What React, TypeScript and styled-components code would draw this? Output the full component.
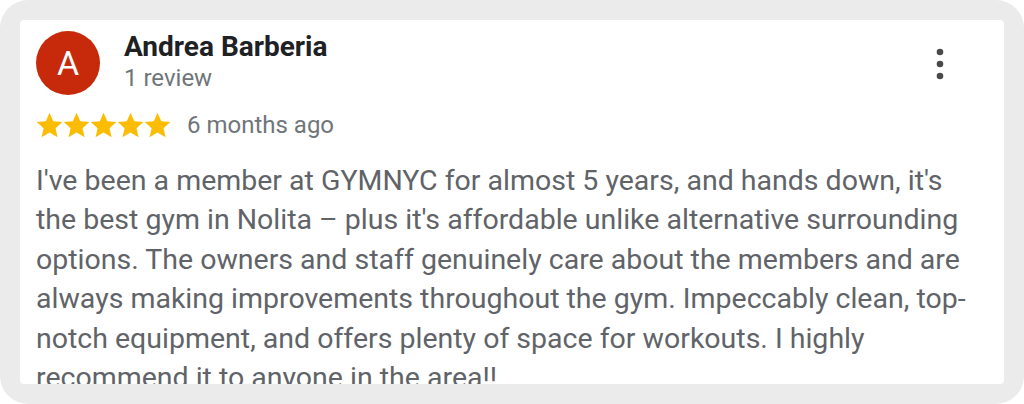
import React from "react";
import styled, { createGlobalStyle } from "styled-components";

const Global = createGlobalStyle`
  html, body { margin: 0; padding: 0; background: #ffffff; }
  body { font-family: Roboto, "Noto Sans", Arial, sans-serif; }
`;

const Frame = styled.div`
  width: 1024px;
  height: 404px;
  box-sizing: border-box;
  background: #ebebeb;
  border-radius: 28px;
  padding: 20px;
`;

const Card = styled.div`
  height: 364px;
  background: #ffffff;
  border-radius: 4px;
  overflow: hidden;
  box-sizing: border-box;
  padding: 11px 16px 0 16px;
`;

const Header = styled.div`
  display: flex;
  align-items: flex-start;
`;

const Avatar = styled.div`
  width: 64px;
  height: 64px;
  border-radius: 50%;
  background: #c62a0b;
  color: #ffffff;
  display: flex;
  align-items: center;
  justify-content: center;
  font-size: 34px;
  font-weight: 400;
  flex-shrink: 0;
`;

const Who = styled.div`
  display: flex;
  flex-direction: column;
  margin-left: 24px;
  flex: 1;
`;

const Name = styled.div`
  font-size: 28px;
  font-weight: 700;
  color: #202124;
  line-height: 32px;
`;

const Sub = styled.div`
  font-size: 24px;
  color: #70757a;
  line-height: 30px;
`;

const More = styled.button`
  border: none;
  background: none;
  padding: 0;
  margin: 16px 36px 0 0;
  width: 24px;
  height: 34px;
  display: flex;
  align-items: center;
  justify-content: center;
`;

const RatingRow = styled.div`
  display: flex;
  align-items: center;
  margin-top: 13px;
  height: 34px;
`;

const Stars = styled.div`
  display: flex;
  margin-right: 16px;
`;

const Ago = styled.span`
  font-size: 24px;
  color: #70757a;
`;

const Body = styled.p`
  margin: 18.5px 0 0 0;
  font-size: 28.5px;
  line-height: 39.5px;
  color: #606368;
`;

const Star = () => (
  <svg width="27" height="27" viewBox="1 1 22 22">
    <path
      fill="#fbbc04"
      d="M12 1.6l3.1 6.9 7.4.7-5.6 5 1.7 7.3L12 17.7l-6.5 3.8 1.7-7.3-5.6-5 7.4-.7z"
    />
  </svg>
);

const Dots = () => (
  <svg width="8" height="32" viewBox="0 0 8 32">
    <circle cx="4" cy="4" r="3.3" fill="#4a4a4a" />
    <circle cx="4" cy="16" r="3.3" fill="#4a4a4a" />
    <circle cx="4" cy="28" r="3.3" fill="#4a4a4a" />
  </svg>
);

export default function App() {
  return (
    <>
      <Global />
      <Frame>
        <Card>
          <Header>
            <Avatar>A</Avatar>
            <Who>
              <Name>Andrea Barberia</Name>
              <Sub>1 review</Sub>
            </Who>
            <More aria-label="More options">
              <Dots />
            </More>
          </Header>
          <RatingRow>
            <Stars>
              <Star />
              <Star />
              <Star />
              <Star />
              <Star />
            </Stars>
            <Ago>6 months ago</Ago>
          </RatingRow>
          <Body>
            I've been a member at GYMNYC for almost 5 years, and hands down, it's the best gym in
            Nolita – plus it's affordable unlike alternative surrounding options. The owners and
            staff genuinely care about the members and are always making improvements throughout
            the gym. Impeccably clean, top-notch equipment, and offers plenty of space for
            workouts. I highly recommend it to anyone in the area!!
          </Body>
        </Card>
      </Frame>
    </>
  );
}
